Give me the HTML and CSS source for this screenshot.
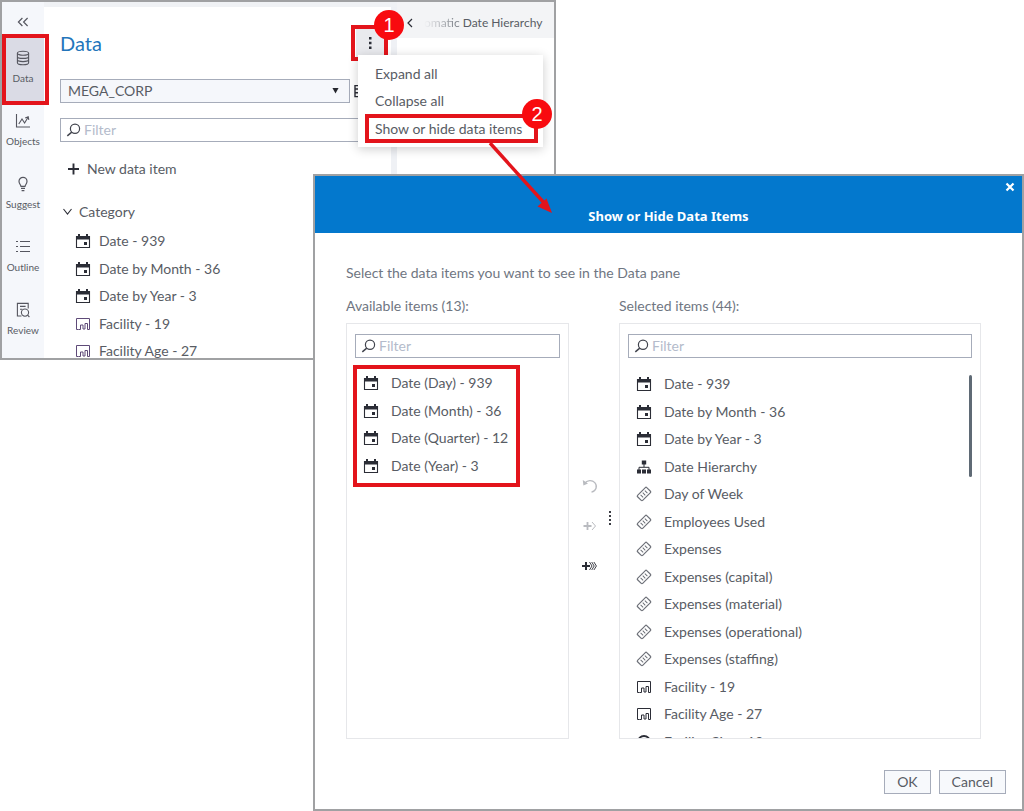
FILE: index.html
```
<!DOCTYPE html>
<html lang="en">
<head>
    <meta charset="UTF-8">
    <meta name="viewport" content="width=device-width, initial-scale=1.0">
    <title>Show or Hide Data Items</title>
    <link rel="stylesheet" href="styles.css">
</head>
<body>

    <!-- Shared icons -->
    <svg class="sprite" aria-hidden="true">
        <symbol id="calendar" viewBox="0 0 16 16">
            <path d="M1.5 3.5h13v11h-13z" fill="none" stroke="currentColor" stroke-width="1.1"/>
            <path d="M1 3h14v3.500H1zM3 1h2v3H3zM11 1h2v3h-2zM9 9h3v3H9z" fill="currentColor"/>
        </symbol>
        <symbol id="category" viewBox="0 0 16 16">
            <path d="M3.500 13.500h-2v-11h13v11h-2v-6h-2.500v5.500h-2v-4h-2.500v4.500z" fill="none" stroke="currentColor" stroke-width="1"/>
        </symbol>
        <symbol id="measure" viewBox="0 0 16 16">
            <g transform="rotate(-45 8 8)" fill="none" stroke="currentColor">
                <rect x="1.500" y="4.400" width="13" height="7.200" rx="1" stroke-width="1.200"/>
                <path d="M5 6.200v3.600M8 6.200v3.600M11 6.200v3.600" stroke-width="1"/>
            </g>
        </symbol>
        <symbol id="hierarchy" viewBox="0 0 16 16">
            <path d="M8 5v3M3 11V8.300h10V11" fill="none" stroke="currentColor" stroke-width="1"/>
            <path d="M5.800 1.500h4.400v4H5.800zM1 10.500h4v4H1zM6 10.500h4v4H6zM11 10.500h4v4h-4z" fill="currentColor"/>
        </symbol>
        <symbol id="location" viewBox="0 0 16 16">
            <circle cx="8" cy="8" r="6" fill="none" stroke="currentColor" stroke-width="1.8"/>
            <circle cx="8" cy="8" r="2" fill="currentColor"/>
        </symbol>
        <symbol id="search" viewBox="0 0 16 16">
            <circle cx="9" cy="6.800" r="4.600" fill="none" stroke="currentColor" stroke-width="1.2"/>
            <path d="M5.800 10.200l-4.500 3.600" fill="none" stroke="currentColor" stroke-width="1.5"/>
        </symbol>
    </svg>

    <!-- Report window -->
    <section class="window app">
        <nav class="rail">
            <button class="rail-toggle" aria-label="Collapse">
                <svg class="icon" viewBox="0 0 16 16"><path d="M7.400 4L3.400 8l4 4M12.600 4l-4 4 4 4" fill="none" stroke="currentColor" stroke-width="1.2"/></svg>
            </button>
            <button class="rail-item active">
                <svg class="icon" viewBox="0 0 16 16"><g fill="none" stroke="currentColor" stroke-width="1.1"><ellipse cx="8" cy="3.2" rx="5.6" ry="2"/><path d="M2.4 3.2v9.600c0 1.1 2.5 2 5.6 2s5.6-.9 5.6-2V3.200M2.400 6.400c0 1.100 2.500 2 5.600 2s5.600-.9 5.600-2M2.400 9.600c0 1.100 2.500 2 5.600 2s5.600-.9 5.600-2"/></g></svg>
                <span>Data</span>
                <i class="mark mark-rail"></i>
            </button>
            <button class="rail-item">
                <svg class="icon" viewBox="0 0 16 16"><g fill="none" stroke="currentColor" stroke-width="1.1"><path d="M1.500 1v13H15"/><path d="M3.800 11l3.200-5 2.600 4 3.600-6M10.200 5l3-1.200.6 3"/></g></svg>
                <span>Objects</span>
            </button>
            <button class="rail-item">
                <svg class="icon" viewBox="0 0 16 16"><g fill="none" stroke="currentColor" stroke-width="1.2"><path d="M6 10.400C5.800 8.600 4 8 4 5.300a4 4 0 0 1 8 0c0 2.700-1.800 3.300-2 5.100zM6 12.400h4M6.600 14.600h2.800"/></g></svg>
                <span>Suggest</span>
            </button>
            <button class="rail-item">
                <svg class="icon" viewBox="0 0 16 16"><path d="M5 2.500h10M5 7.500h10M5 12.500h10M1 2.500h2M1 7.500h2M1 12.500h2" stroke="currentColor" stroke-width="1.1"/></svg>
                <span>Outline</span>
            </button>
            <button class="rail-item">
                <svg class="icon" viewBox="0 0 16 16"><g fill="none" stroke="currentColor" stroke-width="1.1"><path d="M6.500 14H2.400V1.400h10.800v5M5 4.400h5.600M5 7.200h2.400"/><circle cx="10" cy="10.6" r="3.6"/><path d="M12.600 13.200l1.800 1.800"/></g></svg>
                <span>Review</span>
            </button>
        </nav>

        <div class="panel">
            <div class="panel-head">
                <h1>Data</h1>
                <div class="menu-anchor">
                    <button class="more" aria-label="More options">
                        <svg class="icon" viewBox="0 0 16 16"><path d="M7 2h2.500v2.500H7zM7 6.700h2.500v2.500H7zM7 11.400h2.500v2.500H7z" fill="currentColor"/></svg>
                    </button>
                    <i class="mark mark-more"></i>
                    <b class="badge badge-one">1</b>
                    <div class="menu">
                        <button>Expand all</button>
                        <button>Collapse all</button>
                        <button>Show or hide data items</button>
                        <i class="mark mark-menu"></i>
                        <b class="badge badge-two">2</b>
                        <svg class="arrow" viewBox="0 0 70 76"><path d="M4 4l56 62" stroke="#e3141b" stroke-width="3.4"/><path d="M66 74l-14.500-6.500 9-8z" fill="#e3141b"/></svg>
                    </div>
                </div>
            </div>
            <div class="source">
                <div class="select-box">
                    <select aria-label="Data source"><option>MEGA_CORP</option></select>
                    <svg class="caret" viewBox="0 0 8 8"><path d="M.5 1h7L4 7.500z" fill="currentColor"/></svg>
                </div>
                <svg class="icon" viewBox="0 0 16 16"><path d="M1 2.600h13v11H1zM1 6h13M1 9.800h13M5 2.600v11" fill="none" stroke="currentColor" stroke-width="1.4"/></svg>
            </div>
            <label class="filter">
                <svg class="icon"><use href="#search"/></svg>
                <input type="text" placeholder="Filter" aria-label="Filter data">
            </label>
            <button class="new-item">
                <svg class="icon" viewBox="0 0 16 16"><path d="M8.500 2.500v11M3 8h11" stroke="currentColor" stroke-width="1.9"/></svg>
                New data item
            </button>
            <h2 class="group">
                <svg class="icon" viewBox="0 0 16 16"><path d="M3.500 5l4 5 4-5" fill="none" stroke="currentColor" stroke-width="1.1"/></svg>
                Category
            </h2>
            <ul class="items tree">
                <li><svg class="icon"><use href="#calendar"/></svg>Date - 939</li>
                <li><svg class="icon"><use href="#calendar"/></svg>Date by Month - 36</li>
                <li><svg class="icon"><use href="#calendar"/></svg>Date by Year - 3</li>
                <li><svg class="icon violet"><use href="#category"/></svg>Facility - 19</li>
                <li><svg class="icon violet"><use href="#category"/></svg>Facility Age - 27</li>
            </ul>
        </div>

        <div class="canvas">
            <div class="tabs">
                <svg class="icon" viewBox="0 0 16 16"><path d="M10 4L6 8l4 4" fill="none" stroke="currentColor" stroke-width="1.2"/></svg>
                <span class="tab"><span class="faded">omatic</span> Date Hierarchy</span>
            </div>
        </div>
    </section>

    <!-- Dialog -->
    <section class="window dialog" role="dialog" aria-labelledby="dialog-title">
        <header class="dialog-head">
            <button class="close" aria-label="Close">
                <svg viewBox="0 0 10 10"><path d="M1.500 1.500l7 7M8.500 1.500l-7 7" stroke="currentColor" stroke-width="2.200"/></svg>
            </button>
            <h2 id="dialog-title">Show or Hide Data Items</h2>
        </header>

        <div class="dialog-body">
            <p>Select the data items you want to see in the Data pane</p>
            <div class="lists">
                <h3>Available items (13):</h3>
                <h3 class="selected-title">Selected items (44):</h3>

                <div class="list">
                    <label class="filter">
                        <svg class="icon"><use href="#search"/></svg>
                        <input type="text" placeholder="Filter" aria-label="Filter available items">
                    </label>
                    <ul class="items available">
                        <li><svg class="icon"><use href="#calendar"/></svg>Date (Day) - 939</li>
                        <li><svg class="icon"><use href="#calendar"/></svg>Date (Month) - 36</li>
                        <li><svg class="icon"><use href="#calendar"/></svg>Date (Quarter) - 12</li>
                        <li><svg class="icon"><use href="#calendar"/></svg>Date (Year) - 3</li>
                    </ul>
                    <i class="mark mark-list"></i>
                </div>

                <div class="transfer">
                    <div class="transfer-buttons">
                        <button aria-label="Undo" disabled>
                            <svg class="icon" viewBox="0 0 16 16"><path d="M2.500 5.500C5 2 10 1.500 12.800 4.600c3 3.400 1.400 8.400-3.300 9.600" fill="none" stroke="currentColor" stroke-width="1.3"/><path d="M.8 2l.6 5.400 4.600-2z" fill="currentColor"/></svg>
                        </button>
                        <button aria-label="Add" disabled>
                            <svg class="icon" viewBox="0 0 16 16"><path d="M1.500 8h8M5.500 4v8" stroke="currentColor" stroke-width="1.8"/><path d="M10 4l3.500 4-3.500 4" fill="none" stroke="currentColor"/></svg>
                        </button>
                        <button aria-label="Add all">
                            <svg class="icon" viewBox="0 0 16 16"><path d="M0 8h8M4 4v8" stroke="currentColor" stroke-width="2"/><path d="M7.500 4l2.500 4-2.500 4M9.700 4l2.500 4-2.500 4M11.900 4l2.500 4-2.500 4" fill="none" stroke="currentColor" stroke-width=".9"/></svg>
                        </button>
                    </div>
                    <svg class="grip" viewBox="0 0 2 14"><path d="M0 0h2v2H0zM0 4h2v2H0zM0 8h2v2H0zM0 12h2v2H0z" fill="currentColor"/></svg>
                </div>

                <div class="list">
                    <label class="filter">
                        <svg class="icon"><use href="#search"/></svg>
                        <input type="text" placeholder="Filter" aria-label="Filter selected items">
                    </label>
                    <div class="scroller">
                        <ul class="items selected">
                            <li><svg class="icon"><use href="#calendar"/></svg>Date - 939</li>
                            <li><svg class="icon"><use href="#calendar"/></svg>Date by Month - 36</li>
                            <li><svg class="icon"><use href="#calendar"/></svg>Date by Year - 3</li>
                            <li><svg class="icon"><use href="#hierarchy"/></svg>Date Hierarchy</li>
                            <li><svg class="icon light"><use href="#measure"/></svg>Day of Week</li>
                            <li><svg class="icon light"><use href="#measure"/></svg>Employees Used</li>
                            <li><svg class="icon light"><use href="#measure"/></svg>Expenses</li>
                            <li><svg class="icon light"><use href="#measure"/></svg>Expenses (capital)</li>
                            <li><svg class="icon light"><use href="#measure"/></svg>Expenses (material)</li>
                            <li><svg class="icon light"><use href="#measure"/></svg>Expenses (operational)</li>
                            <li><svg class="icon light"><use href="#measure"/></svg>Expenses (staffing)</li>
                            <li><svg class="icon"><use href="#category"/></svg>Facility - 19</li>
                            <li><svg class="icon"><use href="#category"/></svg>Facility Age - 27</li>
                            <li><svg class="icon"><use href="#location"/></svg>Facility City - 19</li>
                        </ul>
                        <i class="thumb"></i>
                    </div>
                </div>
            </div>
        </div>

        <footer class="dialog-foot">
            <button>OK</button>
            <button>Cancel</button>
        </footer>
    </section>

</body>
</html>
```
FILE: styles.css
```
* {
    box-sizing: border-box;
}
body {
    position: relative;
    margin: 0;
    height: 100vh;
    min-height: 640px;
    overflow: hidden;
    background: #fff;
    color: #585c64;
    font-family: Lato, "Liberation Sans", sans-serif;
    font-size: 14px;
    line-height: 20px;
}
h1, h2, h3, p, ul {
    margin: 0;
    padding: 0;
    font-size: 14px;
    font-weight: normal;
}
ul {
    list-style: none;
}
button, input, select {
    font: inherit;
    color: inherit;
}
button {
    padding: 0;
    border: none;
    background: none;
    cursor: pointer;
}
.sprite {
    display: none;
}
.icon {
    flex: none;
    width: 16px;
    height: 16px;
    color: #2b2d36;
}
.icon.violet {
    color: #5e4a78;
}
.icon.light {
    color: #6d7078;
}
.window {
    position: absolute;
    border: 2px solid #a0a1a3;
    background: #fff;
}

/* Report window */
.window.app {
    top: 0;
    left: 0;
    display: flex;
    width: 556px;
    height: 360px;
    overflow: hidden;
    background: linear-gradient(#f0f2f5 5px, #fff 5px);
}
.rail {
    display: flex;
    flex: none;
    flex-direction: column;
    width: 42px;
    background: #f5f7fb;
}
.rail-toggle {
    height: 36px;
    padding-top: 8px;
}
.rail-item {
    position: relative;
    display: flex;
    flex: none;
    flex-direction: column;
    align-items: center;
    gap: 4px;
    height: 63px;
    padding-top: 12px;
    font-size: 10px;
    line-height: 16px;
}
.rail-item.active {
    background: #dadbe5;
}
.rail .icon {
    color: #55565f;
}
.panel {
    flex: none;
    width: 353px;
    margin-top: 5px;
    padding: 18px 7px 0 16px;
    border-right: 6px solid #eff1f5;
}
.panel-head {
    display: flex;
    justify-content: space-between;
    margin-bottom: 18px;
}
.panel h1 {
    color: #2375bb;
    font-size: 20px;
    line-height: 36px;
}
.menu-anchor {
    position: relative;
    padding-top: 4px;
}
.more {
    display: grid;
    place-items: center;
    width: 28px;
    height: 28px;
    background: #e9eaee;
}
.menu {
    position: absolute;
    z-index: 1;
    top: 30px;
    left: 2px;
    display: grid;
    grid-template-rows: 27px 28px 27px;
    width: 185px;
    padding: 5px 17px;
    background: #fff;
    box-shadow: 0 2px 10px rgba(0, 0, 0, 0.2);
}
.menu button {
    text-align: left;
    white-space: nowrap;
}
.source {
    display: flex;
    align-items: center;
    gap: 4px;
    margin-bottom: 15px;
}
.select-box {
    position: relative;
    flex: none;
    width: 290px;
}
.select-box select {
    width: 100%;
    height: 24px;
    padding: 0 7px;
    border: 1px solid #a6acba;
    border-radius: 0;
    background: #f5f7fb;
    appearance: none;
}
.caret {
    position: absolute;
    top: 8px;
    right: 11px;
    width: 7px;
    height: 7px;
    color: #25272e;
}
.filter {
    display: flex;
    align-items: center;
    height: 24px;
    padding: 0 5px;
    border: 1px solid #a6acba;
    background: #fff;
}
.filter .icon {
    color: #41444d;
}
.filter input {
    flex: 1;
    min-width: 0;
    padding: 0 2px;
    border: none;
    background: none;
}
.filter input::placeholder {
    color: #b4bbcb;
}
.new-item, .group {
    display: flex;
    align-items: center;
    gap: 6px;
}
.new-item {
    margin: 17px 0 23px 5px;
}
.group {
    gap: 3px;
    margin-bottom: 5px;
}
.items {
    display: grid;
    grid-auto-rows: 28px 27px;
}
.items li {
    display: flex;
    align-items: center;
    gap: 12px;
    white-space: nowrap;
}
.tree {
    padding-left: 15px;
}
.tree li {
    gap: 8px;
}
.canvas {
    flex: 1;
    min-width: 0;
}
.tabs {
    display: flex;
    align-items: center;
    gap: 6px;
    height: 36px;
    padding: 5px 16px 0 5px;
    background: #f3f4f6;
    font-size: 12px;
    white-space: nowrap;
}
.tab {
    flex: 1;
    text-align: right;
}
.faded {
    background: linear-gradient(to right, #f3f4f6, #70747c);
    background-clip: text;
    color: transparent;
}

/* Dialog */
.dialog {
    top: 174px;
    right: 0;
    bottom: 0;
    left: 313px;
    display: flex;
    flex-direction: column;
}
.dialog-head {
    position: relative;
    flex: none;
    height: 57px;
    padding-top: 30px;
    background: #0378cd;
    color: #fff;
    text-align: center;
}
.dialog-head h2 {
    font-family: "Noto Sans", sans-serif;
    font-size: 13px;
    font-weight: bold;
}
.close {
    position: absolute;
    top: 6px;
    right: 7px;
    width: 10px;
    height: 10px;
}
.close svg {
    display: block;
}
.dialog-body {
    display: flex;
    flex: 1;
    flex-direction: column;
    min-height: 0;
    padding: 30px 41px 31px 31px;
    color: #6f7682;
}
.lists {
    display: grid;
    flex: 1;
    grid-template-columns: 223px 50px 1fr;
    grid-template-rows: 20px minmax(0, 1fr);
    row-gap: 7px;
    min-height: 0;
    padding-top: 13px;
}
.selected-title {
    grid-column: 3;
}
.list {
    position: relative;
    display: flex;
    flex-direction: column;
    min-width: 0;
    min-height: 0;
    padding: 10px 8px 0;
    border: 1px solid #e6e7ea;
    color: #585c64;
}
.list .filter {
    flex: none;
}
.available {
    padding: 11px 8px 0;
}
.scroller {
    position: relative;
    flex: 1;
    min-height: 0;
    overflow: hidden;
}
.selected {
    padding: 12px 8px 0;
}
.thumb {
    position: absolute;
    top: 17px;
    right: 0;
    width: 3px;
    height: 102px;
    border-radius: 2px;
    background: #5f6a75;
}
.transfer {
    display: flex;
    align-items: center;
    gap: 11px;
    padding: 0 8px 10px 13px;
}
.transfer-buttons {
    display: grid;
    gap: 24px;
}
.transfer button {
    height: 16px;
}
.transfer .icon {
    display: block;
}
.transfer button:disabled .icon {
    color: #b9bbc0;
}
.grip {
    width: 2px;
    height: 14px;
    margin-bottom: 16px;
    color: #3b3d44;
}
.dialog-foot {
    display: flex;
    justify-content: flex-end;
    gap: 8px;
    padding: 0 16px 15px;
}
.dialog-foot button {
    height: 24px;
    padding: 0 12px;
    border: 1px solid #a6acba;
    background: #f7f9fc;
}

/* Tutorial marks */
.mark {
    position: absolute;
    border: 4px solid #e3141b;
    pointer-events: none;
}
.mark-rail {
    top: -4px;
    left: 0;
    width: 47px;
    height: 71px;
}
.mark-more {
    top: 0;
    left: -5px;
    width: 37px;
    height: 36px;
}
.mark-menu {
    top: 59px;
    left: 7px;
    width: 173px;
    height: 29px;
}
.mark-list {
    top: 41px;
    left: 6px;
    width: 167px;
    height: 122px;
}
.badge {
    position: absolute;
    z-index: 2;
    width: 30px;
    height: 30px;
    border-radius: 50%;
    background: #f80a0f;
    color: #fff;
    font-family: "Liberation Sans", sans-serif;
    font-size: 20px;
    font-weight: normal;
    line-height: 30px;
    text-align: center;
}
.badge-one {
    top: -15px;
    left: 18px;
}
.badge-two {
    top: 44px;
    left: 164px;
}
.arrow {
    position: absolute;
    top: 84px;
    left: 128px;
    width: 70px;
    height: 76px;
}
```
